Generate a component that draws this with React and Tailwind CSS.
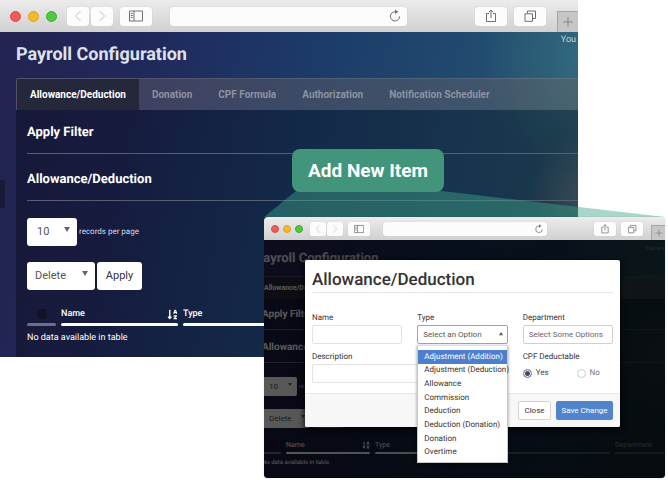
import React from "react";
import { FaSortAlphaDown } from "react-icons/fa";

const large = {
  bar: "h-8 pl-[10px]",
  lights: "gap-[7px]",
  light: "size-[11px]",
  nav: "ml-[10px] gap-[2px]",
  navButton: "h-[19px] w-[22px] rounded-[3px]",
  sidebar: "ml-[7px] h-[19px] w-8 rounded-[3px]",
  address: "ml-[18px] mr-[68px] h-[19px] rounded-[3px]",
  reload: "right-[5px]",
  actions: "gap-[7px] mr-[11px]",
  action: "h-[19px] w-8 rounded-[3px]",
  plus: "h-[21px] w-[21px]",
  icon: "size-[14px]",
  shift: "pl-[16px]",
  user: "right-[2px] top-[3px] text-[9px] leading-[10px]",
  title: "pt-[11px] text-[18px] leading-6",
  tabs: "mt-[11px] h-8 text-[10px] rounded-tl-[2px]",
  tab: "px-[13px]",
  panel: "pl-[11px] pb-[11px]",
  first: "pt-[13px] pb-[10px] text-[13px] leading-5",
  second: "pt-4 pb-[10px] text-[13px] leading-5",
  countRow: "mt-[17px] gap-[2px] text-[8px]",
  actionRow: "mt-4 gap-[2px]",
  field: "h-7 rounded-[3px] text-[11px]",
  count: "w-[50px] pl-[10px]",
  choice: "w-[68px] pl-[8px]",
  arrow: "right-[7px] top-[9px] size-[6px]",
  apply: "w-[45px]",
  table: "mt-4 leading-4",
  head: "text-[9px] font-medium",
  label: "h-4",
  rule: "mt-[1px] h-[3px]",
  cell: "pt-1 text-[9px]",
  checkCol: "w-[29px]",
  nameCol: "w-[117px]",
  tick: "size-[10px]",
  sort: "size-[11px]",
};

const small = {
  bar: "h-[23px] pl-[7px]",
  lights: "gap-[4px]",
  light: "size-[8px]",
  nav: "ml-[7px] gap-[1px]",
  navButton: "h-[14px] w-[16px] rounded-[2px]",
  sidebar: "ml-[5px] h-[14px] w-[22px] rounded-[2px]",
  address: "ml-[13px] mr-[47px] h-[14px] rounded-[2px]",
  reload: "right-[3px]",
  actions: "gap-[5px] mr-[8px]",
  action: "h-[14px] w-[22px] rounded-[2px]",
  plus: "h-[15px] w-[14px]",
  icon: "size-[10px]",
  shift: "-ml-[9px]",
  user: "right-0 top-[5px] text-[6px] leading-[8px]",
  title: "pt-[11px] text-[13px] leading-4",
  tabs: "mt-[9px] h-[23px] text-[7px]",
  tab: "px-[8px]",
  panel: "pl-[7px] pb-[9px]",
  first: "pt-[9px] pb-[7px] text-[10px] leading-[14px]",
  second: "pt-[11px] pb-[7px] text-[10px] leading-[14px]",
  countRow: "mt-[14px] gap-[2px] text-[6px]",
  actionRow: "mt-[13px] gap-[2px]",
  field: "h-[19px] rounded-[2px] text-[8px]",
  count: "w-[35px] pl-[7px]",
  choice: "w-[48px] pl-[7px]",
  arrow: "right-[5px] top-[6px] size-[4px]",
  apply: "w-[32px]",
  table: "mt-[11px] leading-3",
  head: "text-[7px] font-normal",
  label: "h-3",
  rule: "mt-[1px] h-[2px]",
  cell: "pt-[3px] text-[6px]",
  checkCol: "w-[19px]",
  nameCol: "w-[84px]",
  tick: "size-[7px]",
  sort: "size-[8px]",
};

function Icon({ className, children }) {
  return (
    <svg
      viewBox="0 0 14 14"
      className={className}
      fill="none"
      stroke="currentColor"
      aria-hidden="true"
    >
      {children}
    </svg>
  );
}

function BarButton({ label, className, children }) {
  return (
    <button
      type="button"
      aria-label={label}
      className={`flex shrink-0 items-center justify-center bg-[#fcfcfc] text-[#707070] shadow-[0_0_1px_#bbbbbb] ${className}`}
    >
      {children}
    </button>
  );
}

function Toolbar({ s }) {
  return (
    <div className={`flex items-center bg-linear-to-b from-[#edebec] to-[#d1d1d1] ${s.bar}`}>
      <div className={`flex shrink-0 ${s.lights}`}>
        <span className={`rounded-full border border-[#dd4a48] bg-[#ee5c59] ${s.light}`} />
        <span className={`rounded-full border border-[#dfa023] bg-[#f5b92e] ${s.light}`} />
        <span className={`rounded-full border border-[#3cae31] bg-[#4fca40] ${s.light}`} />
      </div>
      <div className={`flex shrink-0 ${s.nav}`}>
        <BarButton label="Back" className={s.navButton}>
          <Icon className={`text-[#c4c4c4] ${s.icon}`}>
            <path d="M9.5 2 4.500 7l5 5" />
          </Icon>
        </BarButton>
        <BarButton label="Forward" className={s.navButton}>
          <Icon className={`text-[#c4c4c4] ${s.icon}`}>
            <path d="M4.500 2 9.500 7l-5 5" />
          </Icon>
        </BarButton>
      </div>
      <BarButton label="Sidebar" className={s.sidebar}>
        <Icon className={s.icon}>
          <path d="M.5 2h13v10H.5zM5 2v10M1.800 4.500h2M1.800 6.500h2M1.800 8.500h2" />
        </Icon>
      </BarButton>
      <div className={`relative flex min-w-0 flex-1 ${s.address}`}>
        <input
          aria-label="Address"
          className="h-full w-full rounded-[3px] bg-[#fcfcfc] shadow-[0_0_1px_#bbbbbb]"
        />
        <Icon className={`absolute inset-y-0 my-auto text-[#707070] ${s.reload} ${s.icon}`}>
          <path d="M7.500 2.800A4.600 4.600 0 1 0 11.600 7.400" />
          <path d="M7 .4 10.200 2.800 7 5.200z" fill="currentColor" stroke="none" />
        </Icon>
      </div>
      <div className={`flex shrink-0 ${s.actions}`}>
        <BarButton label="Share" className={s.action}>
          <Icon className={s.icon}>
            <path d="M5 4.500H2.500v8h9v-8H9M7 9V1M4.800 3.200 7 1l2.200 2.200" />
          </Icon>
        </BarButton>
        <BarButton label="Tabs" className={s.action}>
          <Icon className={s.icon}>
            <path d="M2 4.800h7.500v7.500H2zM4.500 4.500V2h8v7.500H10" />
          </Icon>
        </BarButton>
      </div>
      <button
        type="button"
        aria-label="New tab"
        className={`flex shrink-0 items-center justify-center self-end border-l border-t border-[#a5a5a5] bg-[#c6c6c6] text-[#858585] ${s.plus}`}
      >
        <Icon className={s.icon}>
          <path d="M7 2v10M2 7h10" />
        </Icon>
      </button>
    </div>
  );
}

function Dropdown({ s, label, value, className }) {
  return (
    <div className="relative flex">
      <select
        aria-label={label}
        defaultValue={value}
        className={`appearance-none bg-white text-[#555555] ${s.field} ${className}`}
      >
        <option>{value}</option>
      </select>
      <svg
        viewBox="0 0 6 6"
        className={`pointer-events-none absolute fill-[#666666] ${s.arrow}`}
        aria-hidden="true"
      >
        <path d="M0 0h6L3 5z" />
      </svg>
    </div>
  );
}

const tabs = ["Allowance/Deduction", "Donation", "CPF Formula", "Authorization", "Notification Scheduler"];

function PayrollPage({ s, user, extraColumns }) {
  return (
    <div className="relative overflow-hidden bg-[radial-gradient(circle_at_102%_50%,#a09fa35c_0,#a09fa300_60px),radial-gradient(circle_at_104%_8%,#346e82_0,#346e8200_120px),linear-gradient(100deg,#232350_0%,#20285a_22%,#1c3b68_50%,#224c70_78%,#2a5468_100%)]">
      <span className={`absolute whitespace-nowrap text-[#c5d2da] ${s.user}`}>{user}</span>
      <div className={s.shift}>
        <h1 className={`whitespace-nowrap font-bold text-[#dfe2ec] ${s.title}`}>Payroll Configuration</h1>
        <div className={`flex overflow-hidden border-t border-l border-white/10 bg-[#6e6464]/40 font-bold text-[#8c93a3] ${s.tabs}`}>
          {tabs.map((tab, i) => (
            <button
              key={tab}
              type="button"
              className={`whitespace-nowrap ${s.tab} ${i === 0 ? "bg-[#25273a] text-white" : ""}`}
            >
              {tab}
            </button>
          ))}
        </div>
        <div className={`bg-black/30 ${s.panel}`}>
          <h2 className={`border-b border-[#566075] font-bold text-white ${s.first}`}>Apply Filter</h2>
          <h2 className={`border-b border-[#566075] font-bold text-white ${s.second}`}>Allowance/Deduction</h2>
          <div className={`flex items-center text-[#d5d7e0] ${s.countRow}`}>
            <Dropdown s={s} label="Records per page" value="10" className={s.count} />
            <span>records per page</span>
          </div>
          <div className={`flex ${s.actionRow}`}>
            <Dropdown s={s} label="Bulk action" value="Delete" className={s.choice} />
            <button type="button" className={`bg-white text-[#333333] ${s.field} ${s.apply}`}>
              Apply
            </button>
          </div>
          <div className="-mx-[5px]">
            <table className={`w-full table-fixed border-separate border-spacing-x-[5px] border-spacing-y-0 text-left text-white ${s.table}`}>
              <thead className={s.head}>
                <tr>
                  <th className={`p-0 ${s.checkCol}`}>
                    <div className={`flex items-center justify-center ${s.label}`}>
                      <input
                        type="checkbox"
                        aria-label="Select all"
                        className={`appearance-none rounded-[1px] bg-[#12132a] ${s.tick}`}
                      />
                    </div>
                    <div className={`rounded-full bg-[#6d6d85] ${s.rule}`} />
                  </th>
                  <th className={`p-0 font-[inherit] ${s.head} ${s.nameCol}`}>
                    <div className={`flex items-center justify-between ${s.label}`}>
                      Name
                      <FaSortAlphaDown className={s.sort} aria-hidden="true" />
                    </div>
                    <div className={`rounded-full bg-white ${s.rule}`} />
                  </th>
                  <th className={`p-0 ${s.head}`}>
                    <div className={s.label}>Type</div>
                    <div className={`rounded-full bg-white ${s.rule}`} />
                  </th>
                  {extraColumns && (
                    <>
                      <th className="p-0">
                        <div className={s.label} />
                        <div className={`rounded-full bg-white/35 ${s.rule}`} />
                      </th>
                      <th className={`w-[50px] p-0 text-white/75 ${s.head}`}>
                        <div className={s.label}>Department</div>
                        <div className={`rounded-full bg-white/35 ${s.rule}`} />
                      </th>
                    </>
                  )}
                </tr>
              </thead>
              <tbody>
                <tr>
                  <td colSpan={extraColumns ? 5 : 3} className={`p-0 ${s.cell}`}>
                    No data available in table
                  </td>
                </tr>
              </tbody>
            </table>
          </div>
        </div>
      </div>
    </div>
  );
}

const types = [
  "Adjustment (Addition)",
  "Adjustment (Deduction)",
  "Allowance",
  "Commission",
  "Deduction",
  "Deduction (Donation)",
  "Donation",
  "Overtime",
];

const fieldBox = "block h-[19px] w-full rounded-[2px] border bg-white px-[5px] text-[8px]";
const fieldLabel = "block h-3 text-[8px] leading-[10px] text-[#333333]";

function ItemDialog() {
  return (
    <form
      role="dialog"
      aria-label="Allowance/Deduction"
      className="absolute top-[43px] right-[45px] left-[41px] rounded-[2px] bg-white text-[#444444] shadow-[0_2px_6px_#000000]"
      onSubmit={(e) => e.preventDefault()}
    >
      <div className="px-[7px] pt-[9px] pb-[10px]">
        <h2 className="border-b border-[#e6e6e6] text-[17px] leading-[23px] font-medium text-[#333333]">
          Allowance/Deduction
        </h2>
        <div className="mt-5 grid grid-cols-3 gap-x-[15px] gap-y-2">
          <div>
            <label htmlFor="name" className={fieldLabel}>Name</label>
            <input id="name" className={`${fieldBox} border-[#e2e2e2]`} />
          </div>
          <div className="relative">
            <label htmlFor="type" className={fieldLabel}>Type</label>
            <select
              id="type"
              defaultValue="Select an Option"
              className={`${fieldBox} appearance-none border-[#7fa9e6] text-[#555555]`}
            >
              <option>Select an Option</option>
            </select>
            <svg viewBox="0 0 6 6" className="pointer-events-none absolute top-[19px] right-[5px] size-[4px] fill-[#555555]" aria-hidden="true">
              <path d="M0 5h6L3 0z" />
            </svg>
            <ul
              role="listbox"
              aria-label="Type"
              className="absolute top-8 right-0 left-0 grid h-[118px] auto-rows-fr grid-cols-1 border border-t-[#dddddd] border-[#c8c8c8] bg-white pt-1 pb-[3px] text-[8px] text-[#333333] shadow-[0_1px_3px_#00000066]"
            >
              {types.map((type, i) => (
                <li
                  key={type}
                  role="option"
                  aria-selected={i === 0}
                  className={`flex min-w-0 items-center whitespace-nowrap pl-[6px] ${i === 0 ? "bg-[#4d80cc] text-white" : ""}`}
                >
                  {type}
                </li>
              ))}
            </ul>
          </div>
          <div>
            <label htmlFor="department" className={fieldLabel}>Department</label>
            <input
              id="department"
              placeholder="Select Some Options"
              className={`${fieldBox} border-[#cfcfcf] placeholder:text-[#666666]`}
            />
          </div>
          <div className="col-span-2">
            <label htmlFor="description" className={fieldLabel}>Description</label>
            <input id="description" className={`${fieldBox} border-[#e2e2e2]`} />
          </div>
          <fieldset>
            <legend className={fieldLabel}>CPF Deductable</legend>
            <div className="flex gap-[28px] pt-[1px] text-[8px] leading-4">
              <label className="flex items-center gap-1 text-[#444444]">
                <input
                  type="radio"
                  name="cpf"
                  defaultChecked
                  className="size-[9px] appearance-none rounded-full border border-[#8b8f9c] bg-[#3e4a68] shadow-[inset_0_0_0_1px_#ffffff]"
                />
                Yes
              </label>
              <label className="flex items-center gap-1 text-[#777777]">
                <input
                  type="radio"
                  name="cpf"
                  className="size-[9px] appearance-none rounded-full border border-[#cccccc] bg-white"
                />
                No
              </label>
            </div>
          </fieldset>
        </div>
      </div>
      <div className="flex justify-end gap-[5px] rounded-b-[2px] border-t border-[#e8e8e8] bg-[#f7f7f7] px-[7px] py-[7px] text-[8px]">
        <button type="button" className="h-[19px] w-[33px] rounded-[2px] border border-[#d4d4d4] bg-white text-[#333333]">
          Close
        </button>
        <button type="submit" className="h-[19px] w-[57px] rounded-[2px] bg-[#5284ce] text-white">
          Save Change
        </button>
      </div>
    </form>
  );
}

export default function App() {
  return (
    <main className="relative min-h-screen bg-white font-[Roboto,sans-serif] [text-rendering:geometricPrecision]">
      <section aria-label="Payroll configuration" className="relative mr-[90px]">
        <Toolbar s={large} />
        <PayrollPage s={large} user="You" />
        <span className="absolute top-[180px] left-0 h-7 w-[5px] bg-[#191a3a]" />
      </section>

      <svg
        viewBox="0 0 401 26"
        preserveAspectRatio="none"
        className="absolute top-[191px] right-[3px] left-[264px] h-[26px] w-[calc(100%-267px)]"
        aria-hidden="true"
      >
        <path d="M32 0H178L401 26H0z" fill="#3fa489" fillOpacity="0.45" />
      </svg>

      <button
        type="button"
        className="absolute top-[149px] left-[292px] h-[43px] w-[152px] rounded-lg bg-[#42947a] pt-[2px] text-[19px] font-bold text-white"
      >
        Add New Item
      </button>

      <section
        aria-label="Add new item"
        className="absolute top-[217px] right-[3px] left-[264px] rounded-[4px] shadow-[0_0_1px_#00000066]"
      >
        <div className="overflow-hidden rounded-[4px]">
          <Toolbar s={small} />
          <div className="relative">
            <PayrollPage s={small} user="You are" extraColumns />
            <div className="absolute inset-0 bg-linear-to-r from-black/65 to-black/80" />
          </div>
        </div>
        <ItemDialog />
      </section>
    </main>
  );
}
